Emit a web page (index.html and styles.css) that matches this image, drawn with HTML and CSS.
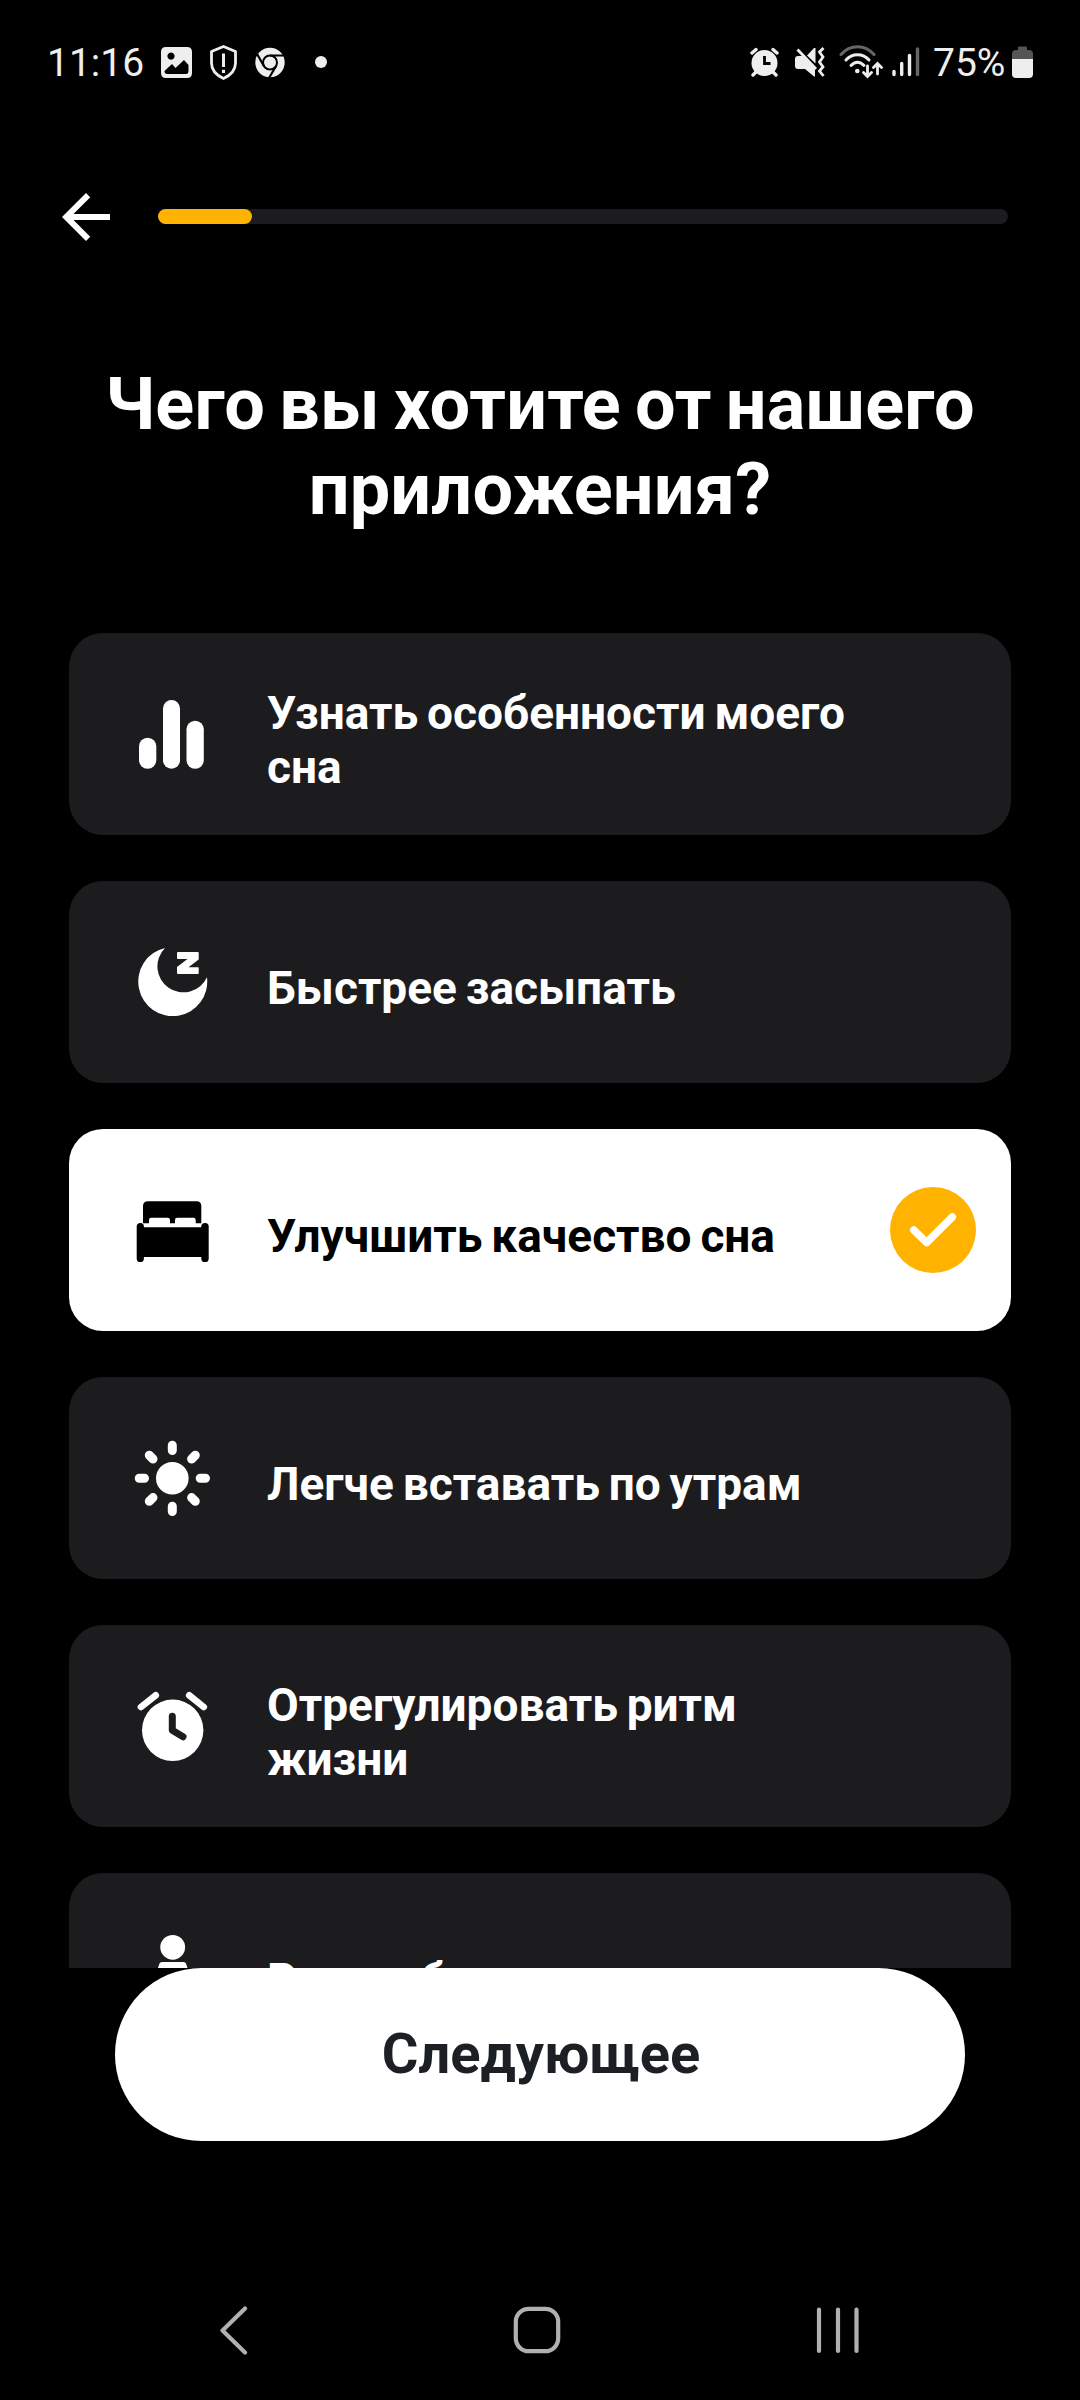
FILE: index.html
```html
<!DOCTYPE html>
<html lang="ru">
<head>
<meta charset="utf-8">
<title>Чего вы хотите от нашего приложения?</title>
<link rel="stylesheet" href="styles.css">
</head>
<body>
<div class="screen">
  <header class="status">
    <div class="status-group status-left">
      <span class="time">11:16</span>
      <svg class="s-image" viewBox="0 0 31 40"><path fill="#eee" fill-rule="evenodd" d="M5 5H26Q31 5 31 10V31Q31 36 26 36H5Q0 36 0 31V10Q0 5 5 5ZM10 10.500a3.600 3.600 0 1 0 .01 0ZM3.500 29Q3.500 32 6 32H25Q27.500 32 27.500 29V23L23 18 14.500 26 11 22Z"/></svg>
      <svg class="s-shield" viewBox="0 0 27 40" fill="none" stroke="#eee"><path stroke-width="2.800" stroke-linejoin="round" d="M13.500 4.500 25.500 9.500V21C25.500 28.500 20 33.500 13.500 36.500C7 33.500 1.500 28.500 1.500 21V9.500Z"/><path stroke-width="3" d="M13.500 11.500V25M13.500 27.800V31"/></svg>
      <svg class="s-chrome" viewBox="0 0 30 40"><circle cx="15" cy="20.500" r="14.700" fill="#eee"/><circle cx="15" cy="20.500" r="7" fill="none" stroke="#000" stroke-width="2"/><path d="M15 13.500H29M8.900 24 1.800 11.500M21.100 24 14 36" fill="none" stroke="#000" stroke-width="2.200"/></svg>
      <svg class="s-dot" viewBox="0 0 12 40"><circle cx="6" cy="20" r="6" fill="#eee"/></svg>
    </div>
    <div class="status-group status-right">
      <svg class="s-alarm" viewBox="0 0 29 40"><circle cx="14.500" cy="21" r="13" fill="#eee"/><path stroke="#eee" stroke-width="3.400" stroke-linecap="round" d="M2 11 6 7.500M27 11 23 7.500M6 30 3 33M23 30 26 33"/><path d="M14.500 14V21.500H20.500" fill="none" stroke="#000" stroke-width="2.800"/></svg>
      <svg class="s-mute" viewBox="0 0 30 40"><path fill="#eee" d="M3 14H8L20 26V34.500H19L10 27H3Q0 27 0 24V17Q0 14 3 14ZM12 13.500 19 6H20.500V21.500Z"/><path fill="none" stroke="#eee" stroke-width="2.800" d="M2.500 7.500 21 27M28.500 6 24.500 10 28 15 24.500 20 28 25 24.500 29 28.500 34"/></svg>
      <svg class="s-wifi" viewBox="0 0 44 40" fill="none" stroke="#eee" stroke-width="3" stroke-linecap="round"><path stroke="#666" d="M2 12.500C11 2 26 2 35 12.500"/><path d="M7 18C13 11 24 11 30 18M12 23.500C16 19 21 19 25 23.500"/><circle cx="18.300" cy="29" r="2.300" fill="#eee" stroke="none"/><path stroke-width="2.800" d="M28.500 24V34M24.500 30.500 28.500 34.500 32.500 30.500M38.500 32V22M34.500 25.500 38.500 21.500 42.500 25.500"/></svg>
      <svg class="s-signal" viewBox="0 0 28 40" fill="none" stroke="#eee" stroke-width="3.400" stroke-linecap="round"><path d="M2 29.500V32.500M9.700 21.500V32.500M17.500 13.500V32.500"/><path stroke="#666" d="M25.500 7V32.500"/></svg>
      <span class="percent">75%</span>
      <svg class="s-battery" viewBox="0 0 21 40"><path fill="#555" d="M6 8V5.500Q6 4.500 7 4.500H14Q15 4.500 15 5.500V8H17Q21 8 21 12V17H0V12Q0 8 4 8Z"/><path fill="#eee" d="M0 17H21V32Q21 36 17 36H4Q0 36 0 32Z"/></svg>
    </div>
  </header>

  <nav class="topbar">
    <svg class="back" viewBox="0 0 24 24"><path fill="#fff" d="M20 11H7.830l5.590-5.590L12 4l-8 8 8 8 1.410-1.410L7.830 13H20v-2z"/></svg>
    <div class="track"><div class="fill"></div></div>
  </nav>

  <h1 class="title">Чего вы хотите от нашего приложения?</h1>

  <main class="list">
    <div class="card">
      <svg class="icon" viewBox="0 0 80 80"><rect x="7" y="43.700" width="17.300" height="31" rx="8.600"/><rect x="31" y="6" width="17" height="68.700" rx="8.500"/><rect x="54.500" y="26.700" width="17.300" height="48" rx="8.600"/></svg>
      <span class="label">Узнать особенности моего сна</span>
    </div>
    <div class="card">
      <svg class="icon" viewBox="0 0 80 80"><path d="M33 6A34.500 34.500 0 1 0 75 35.300A26 26 0 1 1 33 6Z"/><path d="M46 10H66Q66.700 10 66.700 11V17.500L56.500 25.300H66Q66.700 25.300 66.700 26V31Q66.700 32 66 32H46Q45 32 45 31V25L55.500 17H46Q45 17 45 16V11Q45 10 46 10Z"/></svg>
      <span class="label">Быстрее засыпать</span>
    </div>
    <div class="card selected">
      <svg class="icon" viewBox="0 0 80 80"><path d="M16 11.300H64.500Q69.300 11.300 69.300 16V33.300H63.700V30Q63.700 27.700 61.400 27.700H45.300Q43 27.700 43 30V33.300H38V30Q38 27.700 35.700 27.700H19.300Q17 27.700 17 30V33.300H11V16Q11 11.300 16 11.300Z"/><path d="M8 37.300H73V67H8Z"/><rect x="4.700" y="33" width="7.200" height="39" rx="3.600"/><rect x="69.300" y="33" width="7.400" height="39" rx="3.600"/></svg>
      <span class="label">Улучшить качество сна</span>
      <svg class="check" viewBox="0 0 86 86"><circle cx="43" cy="43" r="43" fill="#ffb300"/><path d="M23.700 43 36.700 55.500 62.300 30" fill="none" stroke="#fff" stroke-width="7.500" stroke-linecap="round" stroke-linejoin="round"/></svg>
    </div>
    <div class="card">
      <svg class="icon" viewBox="0 0 80 80"><circle cx="40.300" cy="40.300" r="16.300"/><g stroke="#fff" stroke-width="9" stroke-linecap="round"><path d="M40.300 7.200V12.500M40.300 68.200V73.500M7.200 40.300H12.500M68.200 40.300H73.500M17.300 17.300 21 21M59.600 59.600 63.300 63.300M63.300 17.300 59.600 21M17.300 63.300 21 59.600"/></g></svg>
      <span class="label">Легче вставать по утрам</span>
    </div>
    <div class="card">
      <svg class="icon" viewBox="0 0 80 80"><circle cx="40.700" cy="44.300" r="30.700"/><path stroke="#fff" stroke-width="6.700" stroke-linecap="round" d="M9 21 23.700 9.300M71.700 21 57.300 9.300"/><path fill="none" stroke="#1c1c1e" stroke-width="7" stroke-linecap="round" stroke-linejoin="round" d="M40.300 30.300V44.300L51 50.700"/></svg>
      <span class="label">Отрегулировать ритм жизни</span>
    </div>
    <div class="card">
      <svg class="icon" viewBox="0 0 80 80"><circle cx="40.700" cy="13.300" r="12.400"/><path d="M30 28H51.500Q53.500 28 54 29.500L62 54 70 60 66 66H56V74H25V66H15L11 60 19 54 27.500 29.500Q28 28 30 28Z"/></svg>
      <span class="label">Расслабиться</span>
    </div>
  </main>

  <button class="next">Следующее</button>

  <footer class="navbar">
    <svg viewBox="0 0 50 50"><path d="M35 3.500 12.500 25.500 35 47.500"/></svg>
    <svg viewBox="0 0 50 50"><rect x="3.800" y="3.800" width="42.400" height="42.400" rx="13"/></svg>
    <svg viewBox="0 0 50 50"><path d="M6 4.500V46M25 4.500V46M43.500 4.500V46"/></svg>
  </footer>
</div>
</body>
</html>
```
FILE: styles.css
```css
* { box-sizing: border-box; }
body { margin: 0; background: #000; }
svg { display: block; flex: none; }

.screen {
  width: 1080px;
  height: 2400px;
  overflow: hidden;
  display: flex;
  flex-direction: column;
  background: #000;
  color: #fff;
  font-family: Roboto, "Noto Sans", sans-serif;
}

.status {
  height: 124px;
  padding: 0 47px 0 47px;
  display: flex;
  justify-content: space-between;
  align-items: center;
  color: #eee;
  font-size: 39px;
  line-height: 46px;
}
.status-group { display: flex; align-items: center; }
.status-group svg { height: 40px; }
.time { width: 114px; padding-top: 2px; }
.s-image { width: 31px; }
.s-shield { width: 27px; margin-left: 18px; }
.s-chrome { width: 30px; margin-left: 18px; }
.s-dot { width: 12px; margin-left: 30px; }
.s-alarm { width: 29px; }
.s-mute { width: 30px; margin-left: 16px; }
.s-wifi { width: 44px; margin-left: 14px; }
.s-signal { width: 28px; margin-left: 9px; }
.percent { width: 79px; margin-left: 13px; padding-top: 2px; }
.s-battery { width: 21px; }

.topbar {
  height: 186px;
  padding: 0 72px 0 50px;
  display: flex;
  align-items: center;
  gap: 36px;
}
.back { width: 72px; height: 72px; }
.track {
  flex: 1;
  height: 15px;
  margin-bottom: 2px;
  border-radius: 8px;
  background: #1c1c1e;
}
.fill {
  width: 94px;
  height: 15px;
  border-radius: 8px;
  background: #ffb300;
}

.title {
  height: 323px;
  margin: 0;
  padding: 52px 69px 0;
  text-align: center;
  font-size: 72px;
  line-height: 85px;
  font-weight: 700;
  letter-spacing: 0.2px;
  word-spacing: -0.056em;
}

.list {
  height: 1335px;
  padding: 0 69px;
  overflow: hidden;
  display: flex;
  flex-direction: column;
  gap: 46px;
}
.card {
  flex: none;
  height: 202px;
  padding: 0 35px 0 63px;
  border-radius: 34px;
  display: flex;
  align-items: center;
  background: #1c1c1e;
}
.icon { width: 80px; height: 80px; margin-right: 55px; fill: #fff; }
.label {
  width: 600px;
  padding-top: 12px;
  font-size: 46px;
  line-height: 54px;
  font-weight: 700;
  word-spacing: -0.056em;
}
.selected { background: #fff; color: #000; }
.selected .icon { fill: #000; }
.check { width: 86px; height: 86px; margin-left: auto; }

.next {
  flex: none;
  height: 173px;
  margin: 0 115px;
  padding: 0 0 2px 2px;
  border: 0;
  border-radius: 87px;
  background: #fff;
  color: #1c1f24;
  font: 700 56px/66px Roboto, "Noto Sans", sans-serif;
}

.navbar {
  margin-top: 164px;
  padding: 0 217px 0 210px;
  display: flex;
  justify-content: space-between;
}
.navbar svg {
  width: 50px;
  height: 50px;
  fill: none;
  stroke: #b0b0b0;
  stroke-width: 4.200px;
  stroke-linecap: round;
  stroke-linejoin: round;
}
```
